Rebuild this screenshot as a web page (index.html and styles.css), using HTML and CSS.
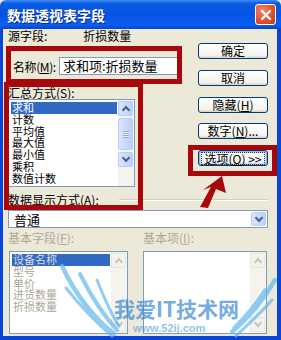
FILE: index.html
```html
<!DOCTYPE html>
<html lang="zh-CN">
<head>
<meta charset="UTF-8">
<title>数据透视表字段</title>
<link rel="stylesheet" href="styles.css">
</head>
<body>

<div class="window">
    <div class="titlebar">
        <span class="title">数据透视表字段</span>
        <span class="close">
            <svg width="12" height="12" viewBox="0 0 12 12"><path d="M2 2 L10 10 M10 2 L2 10" stroke="#fff" stroke-width="2.4" stroke-linecap="round"/></svg>
        </span>
    </div>
    <div class="frame">
        <div class="client">
            <div class="top">
                <div class="left">
                    <div class="src"><span>源字段:</span><span class="src-val">折损数量</span></div>
                    <div class="name">
                        <span class="name-lbl">名称(<u>M</u>):</span>
                        <div class="textbox">求和项:折损数量</div>
                    </div>
                    <div class="cap">汇总方式(<u>S</u>):</div>
                    <div class="listbox sum">
                        <ul class="items">
                            <li class="sel">求和</li>
                            <li>计数</li>
                            <li>平均值</li>
                            <li>最大值</li>
                            <li>最小值</li>
                            <li>乘积</li>
                            <li>数值计数</li>
                        </ul>
                        <div class="vscroll">
                            <span class="sbtn up"></span>
                            <span class="thumb"><i></i></span>
                            <span class="sbtn down"></span>
                        </div>
                    </div>
                </div>
                <div class="buttons">
                    <div class="btn">确定</div>
                    <div class="btn">取消</div>
                    <div class="btn">隐藏(<u>H</u>)</div>
                    <div class="btn">数字(<u>N</u>)...</div>
                    <div class="btn focus"><span class="dots">选项(<u>O</u>) &gt;&gt;</span></div>
                </div>
            </div>

            <div class="show-row">
                <span>数据显示方式(<u>A</u>):</span>
                <span class="etch"></span>
            </div>
            <div class="combo">
                <span class="combo-text">普通</span>
                <span class="drop"></span>
            </div>

            <div class="base">
                <div class="base-col">
                    <div class="cap gray">基本字段(<u>F</u>):</div>
                    <div class="listbox base-left">
                        <ul class="items gray">
                            <li class="sel">设备名称</li>
                            <li>型号</li>
                            <li>单价</li>
                            <li>进货数量</li>
                            <li>折损数量</li>
                        </ul>
                        <div class="vscroll off">
                            <span class="sbtn up"></span>
                            <span class="track"></span>
                            <span class="sbtn down"></span>
                        </div>
                    </div>
                </div>
                <div class="base-col">
                    <div class="cap gray">基本项(<u>I</u>):</div>
                    <div class="listbox base-right">
                        <ul class="items"></ul>
                        <div class="vscroll off">
                            <span class="sbtn up"></span>
                            <span class="track"></span>
                            <span class="sbtn down"></span>
                        </div>
                    </div>
                </div>
            </div>
        </div>
    </div>

    <!-- 标注 -->
    <div class="mark box1"></div>
    <div class="mark box2"></div>
    <div class="mark box3"></div>
    <svg class="arrow" width="281" height="340" viewBox="0 0 281 340">
        <polygon points="200,207 208,208 216,189 226,193 222,176 203,190 211,187" fill="#a8080c"/>
    </svg>

    <!-- 水印 -->
    <svg class="watermark" width="281" height="340" viewBox="0 0 281 340">
        <g fill="none" stroke="#62b8ef" stroke-linecap="round" opacity="0.7">
            <path d="M62 266 C76 296 96 320 114 334" stroke-width="4.5"/>
            <path d="M80 274 C92 298 104 316 117 330" stroke-width="4"/>
            <path d="M97 280 C105 300 111 314 119 326" stroke-width="3"/>
            <path d="M66 288 C82 308 98 324 112 336" stroke-width="3"/>
            <path d="M275 280 C262 302 248 318 232 332" stroke-width="4.5"/>
            <path d="M265 290 C255 306 244 318 234 328" stroke-width="3.5"/>
            <path d="M272 300 C260 314 246 326 236 336" stroke-width="3"/>
        </g>
        <text x="114" y="317" class="wm-big">我爱IT技术网</text>
        <text x="133" y="332" class="wm-small">www.52ij.com</text>
    </svg>
</div>

</body>
</html>
```

FILE: styles.css
```css
body {
    margin: 0;
    background: #ece9d8;
    font-family: "Noto Sans CJK SC", sans-serif;
    font-size: 12px;
    color: #000;
}
u {
    text-decoration: underline;
}
.window {
    position: relative;
    width: 281px;
    height: 340px;
    display: flex;
    flex-direction: column;
    overflow: hidden;
}
.titlebar {
    height: 29px;
    display: flex;
    align-items: center;
    padding: 0 5px 0 7px;
    background: linear-gradient(to bottom, #3f8cf3 0%, #0a5be3 12%, #0553e4 50%, #0a5ef0 85%, #0445d6 100%);
    border-radius: 6px 6px 0 0;
}
.title {
    color: #fff;
    font-weight: bold;
    font-size: 14px;
    text-shadow: 1px 1px 0 #0a2a8a;
}
.close {
    margin-left: auto;
    width: 19px;
    height: 19px;
    border: 1px solid #fff;
    border-radius: 3px;
    background: radial-gradient(circle at 35% 30%, #f28a6c 0%, #e2552f 50%, #c33a17 100%);
    display: flex;
    align-items: center;
    justify-content: center;
}
.frame {
    flex: 1;
    display: flex;
    background: #0846d8;
    padding: 0 4px 4px 3px;
}
.client {
    flex: 1;
    background: #ece9d8;
    display: flex;
    flex-direction: column;
    padding: 0 9px 0 5px;
}
.top {
    display: flex;
}
.left {
    width: 172px;
    display: flex;
    flex-direction: column;
}
.src {
    height: 14px;
    line-height: 14px;
    display: flex;
}
.src-val {
    margin-left: 36px;
}
.name {
    margin-top: 14px;
    height: 18px;
    display: flex;
    align-items: center;
}
.name-lbl {
    margin-left: 5px;
    width: 46px;
    white-space: nowrap;
    letter-spacing: -0.4px;
    flex: none;
}
.textbox {
    width: 119px;
    height: 16px;
    line-height: 16px;
    border: 1px solid #7f9db9;
    background: #fff;
    padding-left: 3px;
    font-size: 13px;
    white-space: nowrap;
}
.cap {
    margin-top: 11px;
    height: 13px;
    line-height: 13px;
    white-space: nowrap;
}
.gray {
    color: #aca899;
}
.listbox {
    border: 1px solid #7f9db9;
    background: #fff;
    display: flex;
    box-sizing: border-box;
}
.listbox.sum {
    width: 127px;
    height: 88px;
}
.items {
    list-style: none;
    margin: 0;
    padding: 2px 1px 0 2px;
    flex: 1;
    font-size: 11px;
}
.items li {
    height: 11.8px;
    line-height: 11.8px;
    padding-left: 1px;
}
.items li.sel {
    background: #316ac5;
    color: #fff;
}
.items.gray li.sel {
    color: #dcdcdc;
}
.vscroll {
    width: 15px;
    display: flex;
    flex-direction: column;
    background: #f4f3ee;
    padding: 1px 1px 1px 0;
}
.sbtn {
    height: 15px;
    border: 1px solid #b9cdf6;
    border-radius: 2px;
    background: linear-gradient(to right, #dbe6fd, #bccffa);
    position: relative;
    box-sizing: border-box;
}
.sbtn::after {
    content: "";
    position: absolute;
    left: 4px;
    width: 4px;
    height: 4px;
    border-left: 2px solid #4d6185;
    border-top: 2px solid #4d6185;
}
.sbtn.up::after {
    top: 5px;
    transform: rotate(45deg);
}
.sbtn.down::after {
    top: 2px;
    transform: rotate(225deg);
}
.thumb {
    margin: 2px 0;
    height: 32px;
    border: 1px solid #b9cdf6;
    border-radius: 2px;
    background: linear-gradient(to right, #dbe6fd, #bccffa);
    box-sizing: border-box;
    display: flex;
    align-items: center;
    justify-content: center;
}
.thumb i {
    width: 6px;
    height: 7px;
    background: repeating-linear-gradient(to bottom, #8ea8e0 0 1px, #eef3fe 1px 2px);
}
.track {
    flex: 1;
}
.vscroll.off .sbtn {
    border-color: #e8e6dc;
    background: #f3f2ec;
}
.vscroll.off .sbtn::after {
    border-color: #c9c7ba;
}
.buttons {
    margin-left: 18px;
    padding-top: 14px;
    display: flex;
    flex-direction: column;
    gap: 10.8px;
}
.btn {
    width: 70px;
    height: 16px;
    box-sizing: border-box;
    border: 1px solid #003c74;
    border-radius: 3px;
    background: linear-gradient(to bottom, #ffffff, #f4f3ee 80%, #d8d4c8);
    text-align: center;
    line-height: 14px;
    white-space: nowrap;
}
.btn.focus {
    box-shadow: inset 0 0 0 1px #98b4ec, inset 0 0 0 2px #c9daf7;
    display: flex;
    align-items: center;
    justify-content: center;
}
.dots {
    outline: 1px dotted #333;
    padding: 0 2px;
    line-height: 11px;
}
.show-row {
    margin-top: 6px;
    height: 14px;
    line-height: 14px;
    display: flex;
    align-items: center;
    white-space: nowrap;
}
.etch {
    flex: 1;
    margin-left: 20px;
    height: 0;
    border-top: 1px solid #d0d0bf;
    border-bottom: 1px solid #fff;
}
.combo {
    margin-top: 3px;
    height: 18px;
    border: 1px solid #7f9db9;
    background: #fff;
    display: flex;
    align-items: center;
    box-sizing: border-box;
    padding: 1px;
}
.combo-text {
    flex: 1;
    padding-left: 4px;
    font-size: 13px;
}
.drop {
    width: 15px;
    height: 14px;
    border: 1px solid #b9cdf6;
    border-radius: 2px;
    background: linear-gradient(to right, #dbe6fd, #bccffa);
    position: relative;
    box-sizing: border-box;
}
.drop::after {
    content: "";
    position: absolute;
    left: 4px;
    top: 2px;
    width: 4px;
    height: 4px;
    border-left: 2px solid #4d6185;
    border-top: 2px solid #4d6185;
    transform: rotate(225deg);
}
.base {
    display: grid;
    grid-template-columns: 135px 124px;
    margin-top: 1px;
}
.base .cap {
    margin-top: 2px;
    height: 14px;
    line-height: 14px;
}
.base-col .listbox {
    margin-top: 6px;
    height: 83px;
}
.base-left {
    width: 119px;
    margin-left: 1px;
}
.base-right {
    width: 124px;
}
.mark {
    position: absolute;
    border: 5px solid #a8080c;
    box-sizing: border-box;
}
.box1 {
    left: 6px;
    top: 46px;
    width: 176px;
    height: 38px;
}
.box2 {
    left: 4px;
    top: 82px;
    width: 139px;
    height: 128px;
}
.box3 {
    left: 188px;
    top: 145px;
    width: 89px;
    height: 31px;
}
.arrow, .watermark {
    position: absolute;
    left: 0;
    top: 0;
}
.wm-big {
    font-family: "Noto Sans CJK SC", sans-serif;
    font-weight: bold;
    font-size: 21px;
    fill: #3a8ad8;
    opacity: 0.7;
}
.wm-small {
    font-family: "Liberation Sans", sans-serif;
    font-weight: bold;
    font-size: 11px;
    fill: #4a9ae0;
    opacity: 0.6;
}
```
